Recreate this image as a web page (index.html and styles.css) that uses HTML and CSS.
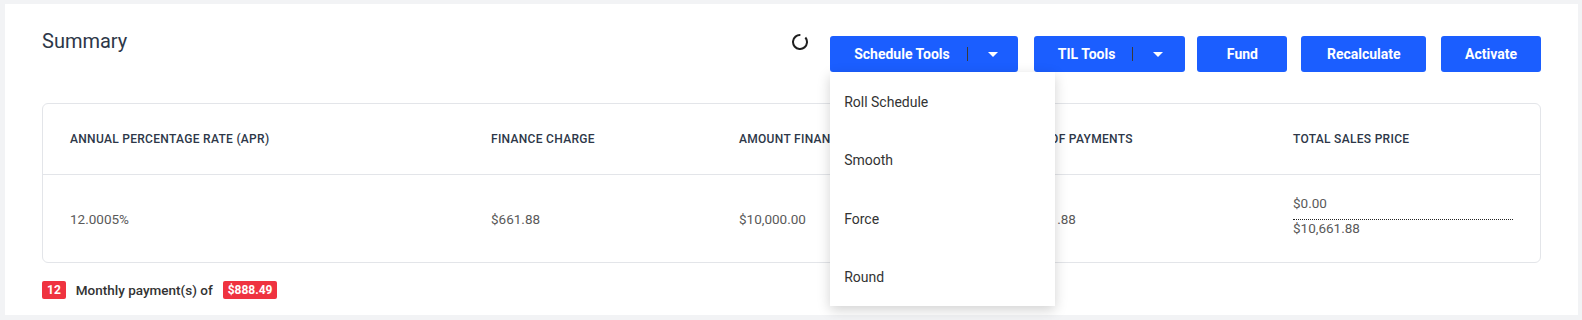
FILE: index.html
```html
<!DOCTYPE html>
<html lang="en">
<head>
<meta charset="utf-8">
<title>Summary</title>
<link rel="stylesheet" href="styles.css">
</head>
<body>
<div class="page">
  <section class="card">
    <header class="card-head">
      <h2 class="title">Summary</h2>
      <div class="actions">
        <span class="spinner">
          <svg width="16" height="16" viewBox="0 0 16 16"><circle cx="8" cy="8" r="7" fill="none" stroke="#1f1f1f" stroke-width="2" stroke-dasharray="38 6" transform="rotate(-40 8 8)"/></svg>
        </span>
        <div class="split">
          <button class="btn btn-split btn-schedule"><span>Schedule Tools</span><span class="divider"></span><span class="caret"></span></button>
          <ul class="menu">
            <li>Roll Schedule</li>
            <li>Smooth</li>
            <li>Force</li>
            <li>Round</li>
          </ul>
        </div>
        <div class="split split-til">
          <button class="btn btn-split"><span>TIL Tools</span><span class="divider"></span><span class="caret"></span></button>
        </div>
        <button class="btn btn-fund">Fund</button>
        <button class="btn btn-recalc">Recalculate</button>
        <button class="btn btn-activate">Activate</button>
      </div>
    </header>

    <div class="table-wrap">
      <table class="summary-table">
        <colgroup>
          <col class="col-apr">
          <col class="col-charge">
          <col class="col-amount">
          <col class="col-total">
          <col class="col-sales">
        </colgroup>
        <thead>
          <tr>
            <th>Annual Percentage Rate (APR)</th>
            <th>Finance Charge</th>
            <th>Amount Financed</th>
            <th>Total of Payments</th>
            <th>Total Sales Price</th>
          </tr>
        </thead>
        <tbody>
          <tr>
            <td>12.0005%</td>
            <td>$661.88</td>
            <td>$10,000.00</td>
            <td>$10,661.88</td>
            <td>
              <div class="stack">
                <div class="stack-top">$0.00</div>
                <div class="stack-bottom">$10,661.88</div>
              </div>
            </td>
          </tr>
        </tbody>
      </table>
    </div>

    <div class="payments">
      <span class="badge">12</span>
      <span class="pay-text">Monthly payment(s) of</span>
      <span class="badge">$888.49</span>
    </div>
  </section>
</div>
</body>
</html>
```
FILE: styles.css
```css
html, body {
  margin: 0;
  padding: 0;
}

body {
  background: #f2f3f5;
  font-family: Roboto, "Liberation Sans", Arial, sans-serif;
}

.page {
  padding: 4px 4px 5px 5px;
}

.card {
  background: #ffffff;
  padding: 25px 37px 16px;
  height: 311px;
  box-sizing: border-box;
}

.card-head {
  display: flex;
  justify-content: space-between;
  align-items: flex-start;
}

.title {
  margin: 0;
  font-size: 20px;
  font-weight: 400;
  line-height: 24px;
  color: #2d3748;
}

.actions {
  display: flex;
  align-items: flex-start;
  margin-top: 7px;
}

.spinner {
  display: block;
  width: 16px;
  height: 16px;
  margin-top: -2px;
  margin-right: 22px;
}

.spinner svg {
  display: block;
}

.btn {
  height: 36px;
  border: 0;
  border-radius: 3px;
  background: #1b5eff;
  color: #ffffff;
  font-family: Roboto, "Liberation Sans", Arial, sans-serif;
  font-size: 14px;
  font-weight: 700;
  padding: 0 24px;
  display: flex;
  align-items: center;
  justify-content: center;
  cursor: pointer;
}

.split-til {
  margin-left: 16px;
}

.btn-fund {
  min-width: 90px;
  margin-left: 12px;
}

.btn-recalc {
  padding: 0 25.5px;
  margin-left: 14px;
}

.btn-activate {
  margin-left: 15px;
}

.btn-split {
  padding: 0 22px 0 24px;
}

.btn-schedule {
  padding: 0 20px 0 24px;
}

.divider {
  width: 1px;
  height: 14px;
  background: #3a3a3a;
  margin: 0 20px 0 17px;
}

.caret {
  width: 0;
  height: 0;
  border-left: 5px solid transparent;
  border-right: 5px solid transparent;
  border-top: 5px solid #ffffff;
}

.split {
  position: relative;
}

.menu {
  position: absolute;
  top: 100%;
  left: 0;
  width: 225px;
  margin: 0;
  padding: 0;
  list-style: none;
  background: #ffffff;
  box-shadow: 0 4px 12px rgba(0, 0, 0, 0.18);
  z-index: 10;
}

.menu li {
  height: 58.5px;
  box-sizing: border-box;
  padding: 1px 0 0 14px;
  display: flex;
  align-items: center;
  font-size: 14px;
  color: #333333;
}

.table-wrap {
  margin-top: 31px;
  border: 1px solid #e3e5e9;
  border-radius: 6px;
  overflow: hidden;
}

.summary-table {
  width: 100%;
  table-layout: fixed;
  border-collapse: collapse;
}

.col-apr { width: 421px; }
.col-charge { width: 248px; }
.col-amount { width: 270px; }
.col-total { width: 284px; }
.col-sales { width: auto; }

.summary-table th {
  height: 70px;
  padding: 0 27px;
  text-align: left;
  font-size: 12px;
  font-weight: 500;
  letter-spacing: 0.3px;
  text-transform: uppercase;
  color: #2d3748;
  border-bottom: 1px solid #e3e5e9;
  vertical-align: middle;
  white-space: nowrap;
}

.summary-table td {
  height: 87px;
  padding: 0 27px;
  font-size: 13.5px;
  color: #5a5a5a;
  vertical-align: middle;
}

.stack {
  margin-bottom: 5px;
}

.stack-top {
  line-height: 15px;
  padding-bottom: 8.5px;
  border-bottom: 1px dotted #222222;
}

.stack-bottom {
  line-height: 15px;
  padding-top: 1px;
}

.payments {
  margin-top: 18px;
  display: flex;
  align-items: center;
  gap: 10px;
}

.badge {
  height: 18px;
  padding: 0 5px;
  display: inline-flex;
  align-items: center;
  background: #ef3340;
  color: #ffffff;
  font-size: 12px;
  font-weight: 700;
  border-radius: 2px;
}

.pay-text {
  font-size: 13.5px;
  font-weight: 500;
  color: #333333;
}
```
